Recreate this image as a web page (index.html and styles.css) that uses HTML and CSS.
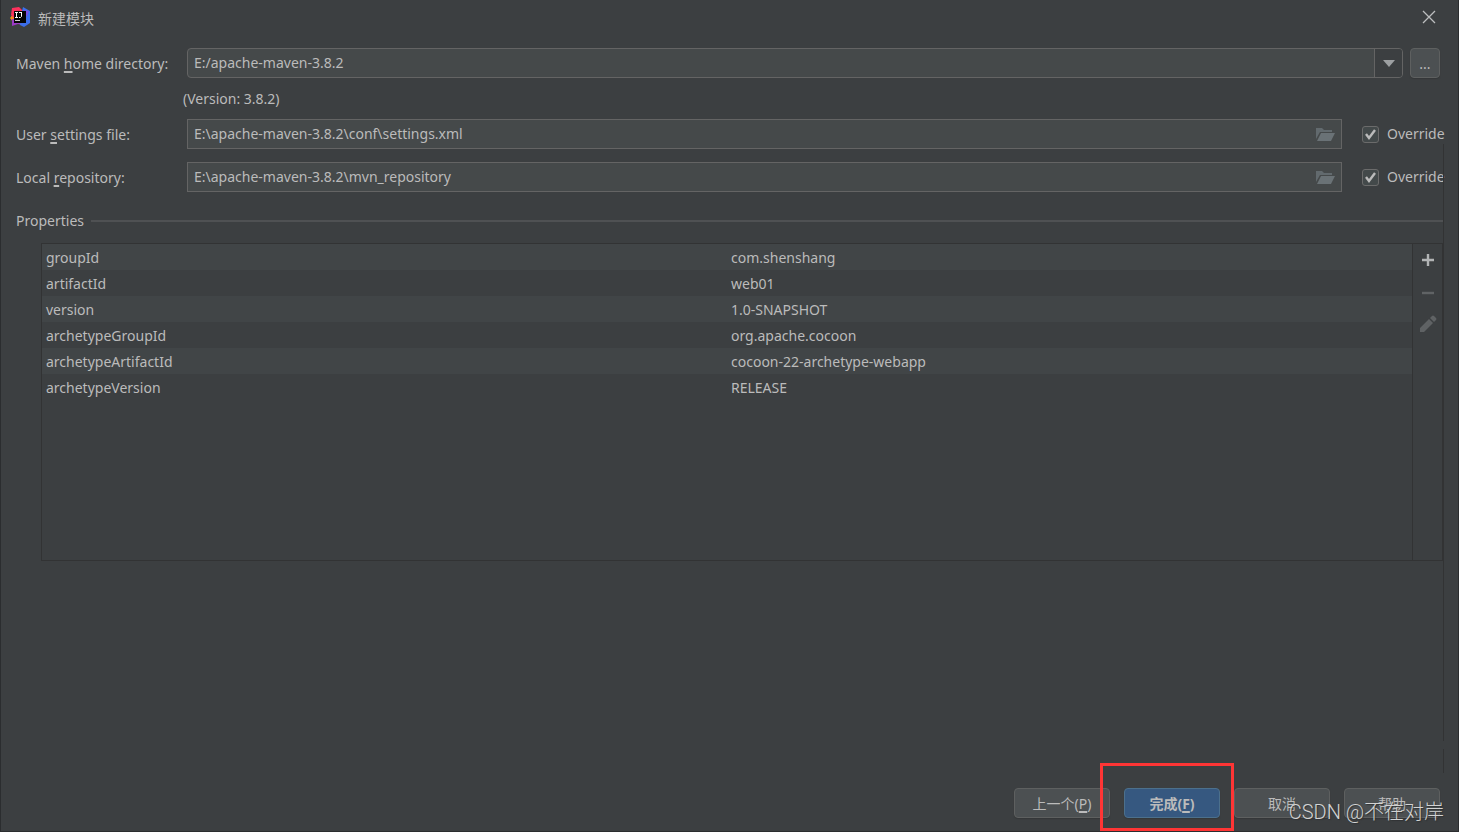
FILE: index.html
```html
<!DOCTYPE html>
<html lang="zh-CN">
<head>
<meta charset="utf-8">
<title>新建模块</title>
<link rel="stylesheet" href="styles.css">
</head>
<body>
<div class="dialog">
  <header class="titlebar">
    <svg class="logo" viewBox="0 0 20 20" aria-hidden="true">
      <path fill="#f78a1d" d="M0 11 3 7l3 5-3 3z"/>
      <path fill="#fe315d" d="M2 1 9 0l4 4-8 8-4-4z"/>
      <path fill="#9b3bc4" d="M2 12h8l2 6-4-1-6 2z"/>
      <path fill="#3b6eea" d="m13 0 7 4v12l-6 4-4-2 2-14z"/>
      <path fill="#7b4ee0" d="m14 3 5 1-2 5-3 1z"/>
      <path fill="#050505" d="M4 4h12v12H4z"/>
      <path stroke="#fff" fill="none" d="M5 5.500h3M6.500 5.500v5M5 10.500h3M9 5.500h3M11.500 5v4.500l-1 1H9"/>
      <path fill="#ccc" d="M5 13h5v1H5z"/>
    </svg>
    <h1 class="title">新建模块</h1>
    <button class="close" type="button" aria-label="关闭">
      <svg viewBox="0 0 14 14" width="14" height="14"><path d="m1 1 12 12M13 1 1 13" stroke="#bcbebf" stroke-width="1.300" fill="none"/></svg>
    </button>
  </header>

  <main class="content">
    <div class="row">
      <label class="label" for="home">Maven <u>h</u>ome directory:</label>
      <div class="combo">
        <select id="home" class="combo-select"><option>E:/apache-maven-3.8.2</option></select>
        <span class="combo-arrow"><svg viewBox="0 0 12 7" width="12" height="7"><path d="M0 0h12L6 7z" fill="#9da0a2"/></svg></span>
      </div>
      <button class="button browse" type="button" aria-label="Browse">...</button>
    </div>
    <p class="version">(Version: 3.8.2)</p>
    <div class="row">
      <label class="label" for="settings">User <u>s</u>ettings file:</label>
      <div class="field">
        <input id="settings" class="field-input" type="text" value="E:\apache-maven-3.8.2\conf\settings.xml">
        <button class="folder" type="button" aria-label="Browse settings file"><svg viewBox="0 0 19 14" width="19" height="14"><path d="M0 1h6l2 2h8v2H4l-4 7z" fill="#626a6e"/><path d="M5 6h14l-4 8H1z" fill="#6a7276"/></svg></button>
      </div>
      <label class="override"><input class="check" type="checkbox" checked>Override</label>
    </div>
    <div class="row">
      <label class="label" for="repo">Local <u>r</u>epository:</label>
      <div class="field">
        <input id="repo" class="field-input" type="text" value="E:\apache-maven-3.8.2\mvn_repository">
        <button class="folder" type="button" aria-label="Browse repository"><svg viewBox="0 0 19 14" width="19" height="14"><path d="M0 1h6l2 2h8v2H4l-4 7z" fill="#626a6e"/><path d="M5 6h14l-4 8H1z" fill="#6a7276"/></svg></button>
      </div>
      <label class="override"><input class="check" type="checkbox" checked>Override</label>
    </div>

    <h2 class="section">Properties</h2>
    <section class="properties">
      <div class="table-area">
        <table class="table">
          <tbody>
            <tr><td>groupId</td><td>com.shenshang</td></tr>
            <tr><td>artifactId</td><td>web01</td></tr>
            <tr><td>version</td><td>1.0-SNAPSHOT</td></tr>
            <tr><td>archetypeGroupId</td><td>org.apache.cocoon</td></tr>
            <tr><td>archetypeArtifactId</td><td>cocoon-22-archetype-webapp</td></tr>
            <tr><td>archetypeVersion</td><td>RELEASE</td></tr>
          </tbody>
        </table>
      </div>
      <div class="tools">
        <button class="tool" type="button" aria-label="Add"><svg viewBox="0 0 18 18" width="18" height="18"><path d="M9 3v12M3 9h12" stroke="#b2b4b5" stroke-width="2.400"/></svg></button>
        <button class="tool" type="button" aria-label="Remove" disabled><svg viewBox="0 0 18 18" width="18" height="18"><path d="M3 10h12" stroke="#606365" stroke-width="2.400"/></svg></button>
        <button class="tool" type="button" aria-label="Edit" disabled><svg viewBox="0 0 18 18" width="18" height="18"><path d="m1 13 9-9 4 4-9 9H1zM11 3l2-2q1-1 2 0l2 2q1 1 0 2l-2 2z" fill="#5f6264"/></svg></button>
      </div>
    </section>
    <div class="edge"></div>
  </main>

  <footer class="footer">
    <button class="button action" type="button">上一个(<u>P</u>)</button>
    <button class="button action primary" type="button">完成(<u>F</u>)</button>
    <button class="button action" type="button">取消</button>
    <button class="button action" type="button">帮助</button>
  </footer>
  <div class="highlight"></div>
  <div class="watermark">CSDN @不在对岸</div>
</div>
</body>
</html>
```
FILE: styles.css
```css
* { box-sizing: border-box; }

body {
  margin: 0;
  background: #3c3f41;
  color: #bbbbbb;
  font: 14px/20px "Noto Sans", "Noto Sans CJK SC", sans-serif;
}

button, input, select { font: inherit; color: inherit; margin: 0; }
button { padding: 0; background: none; border: 0; }
svg { display: block; }
u { text-decoration-thickness: 2px; text-underline-offset: 2px; }

.dialog {
  position: relative;
  display: flex;
  flex-direction: column;
  min-height: 100vh;
  border: 1px solid #2b2d2f;
  border-top: 0;
}

.titlebar {
  display: flex;
  align-items: center;
  height: 36px;
  padding: 0 22px 0 9px;
}
.logo { width: 20px; height: 20px; margin-bottom: 2px; }
.title { flex: 1; margin: 2px 0 0 8px; font-size: 14px; font-weight: 400; }
.close { margin-bottom: 2px; }

.content {
  position: relative;
  flex: 1;
  display: flex;
  flex-direction: column;
  padding: 12px 15px 0;
}
.row { display: flex; align-items: center; height: 30px; margin-bottom: 13px; }
.label { width: 171px; flex: none; padding-top: 2px; }

.combo {
  position: relative;
  flex: 1;
  height: 30px;
  border: 1px solid #646464;
  border-radius: 4px;
  background: #45494a;
  overflow: hidden;
}
.combo-select {
  appearance: none;
  display: block;
  width: 100%;
  height: 28px;
  padding: 0 28px 0 6px;
  border: 0;
  background: none;
}
.combo-arrow {
  position: absolute;
  top: 0;
  right: 0;
  bottom: 0;
  width: 28px;
  display: grid;
  place-items: center;
  border-left: 1px solid #646464;
  background: #3c3f41;
  pointer-events: none;
}

.button {
  height: 30px;
  padding-top: 2px;
  border: 1px solid #5e6060;
  border-radius: 4px;
  background: #4c5052;
  box-shadow: 0 1px 1px #353739;
}
.browse { width: 30px; margin: 0 3px 0 7px; }

.version { margin: -2px 0 10px 167px; }

.field {
  flex: 1;
  display: flex;
  align-items: center;
  height: 30px;
  padding-right: 6px;
  border: 1px solid #646464;
  background: #45494a;
}
.field-input {
  flex: 1;
  min-width: 0;
  height: 28px;
  padding: 0 6px 2px;
  border: 0;
  outline: 0;
  background: none;
}
.override {
  display: flex;
  align-items: center;
  gap: 8px;
  width: 81px;
  margin-left: 20px;
  white-space: nowrap;
}
.check {
  appearance: none;
  flex: none;
  width: 17px;
  height: 17px;
  border: 1px solid #6b6b6b;
  border-radius: 3px;
  background: #43494a;
}
.check:checked {
  background: #43494a url("data:image/svg+xml,%3Csvg xmlns='http://www.w3.org/2000/svg' viewBox='0 0 15 15'%3E%3Cpath d='m3 7 3 4 6-8' fill='none' stroke='%23bbbbbb' stroke-width='2.4'/%3E%3C/svg%3E");
}

.section {
  display: flex;
  align-items: center;
  gap: 7px;
  margin: 6px 0 12px;
  font-size: 14px;
  font-weight: 400;
}
.section::after { content: ""; flex: 1; height: 2px; background: #4f5153; }

.properties {
  display: flex;
  height: 318px;
  margin-left: 25px;
  border: 1px solid #323334;
}
.table-area { flex: 1; }
.table { width: 100%; border-collapse: collapse; table-layout: fixed; }
.table td { height: 26px; padding: 2px 4px 0; line-height: 24px; }
.table tr:nth-child(odd) { background: #414547; }
.tools {
  display: flex;
  flex-direction: column;
  align-items: center;
  gap: 14px;
  width: 30px;
  padding-top: 7px;
  border-left: 1px solid #323334;
}

.edge {
  position: absolute;
  top: 108px;
  right: 14px;
  bottom: 0;
  width: 1px;
  background: linear-gradient(to top, #323334 24px, transparent 24px 32px, #323334 32px);
}

.footer {
  display: flex;
  justify-content: flex-end;
  gap: 14px;
  padding: 15px 18px 13px;
}
.action { width: 96px; }
.primary { border-color: #4c708c; background: #365880; font-weight: 700; }

.highlight {
  position: absolute;
  right: 224px;
  bottom: 0;
  width: 134px;
  height: 68px;
  border: 3px solid #ff3535;
}
.watermark {
  position: absolute;
  right: 14px;
  bottom: 6px;
  color: #d2d3d3;
  font: 20px/26px Roboto, "Noto Sans CJK SC", sans-serif;
  font-weight: 300;
  text-shadow: 1px 1px 1px #303234;
  white-space: nowrap;
}
```
